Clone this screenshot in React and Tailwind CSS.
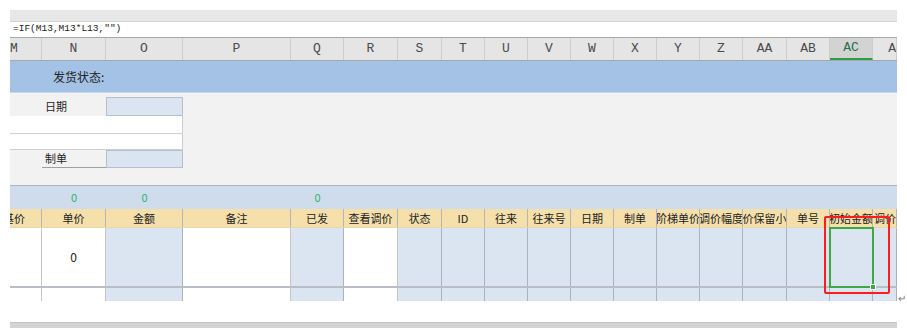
import React from "react";

const cjk = { fontFamily: '"Noto Sans CJK SC", "Noto Sans", sans-serif' };
const song = { fontFamily: '"Liberation Mono", "Noto Sans CJK SC", monospace' };

const cols = [
  { k: "M", w: 32, head: "基价", blue: false, shift: true },
  { k: "N", w: 64, head: "单价", blue: false, sum: "0", val: "0" },
  { k: "O", w: 77, head: "金额", blue: true, sum: "0" },
  { k: "P", w: 108, head: "备注", blue: false },
  { k: "Q", w: 53, head: "已发", blue: true, sum: "0" },
  { k: "R", w: 54, head: "查看调价", blue: false },
  { k: "S", w: 44, head: "状态", blue: true },
  { k: "T", w: 43, head: "ID", blue: true },
  { k: "U", w: 43, head: "往来", blue: true },
  { k: "V", w: 43, head: "往来号", blue: true },
  { k: "W", w: 43, head: "日期", blue: true },
  { k: "X", w: 43, head: "制单", blue: true },
  { k: "Y", w: 43, head: "阶梯单价", blue: true },
  { k: "Z", w: 43, head: "调价幅度", blue: true },
  { k: "AA", w: 44, head: "单价保留小数", blue: true },
  { k: "AB", w: 43, head: "单号", blue: true },
  { k: "AC", w: 43, head: "初始金额", blue: true, active: true },
  { k: "AD", w: 24, head: "调价单价", blue: true, tail: true },
];

// one grid cell; the first and last columns are cut by the window edge
function Cell({ c, className, children }) {
  const inner = c.shift
    ? { width: 56, marginLeft: -24 }
    : c.tail
    ? { width: 46, marginLeft: 0 }
    : { width: "100%" };
  return (
    <div className={"h-full shrink-0 overflow-hidden " + (className || "")} style={{ width: c.w }}>
      <div className="h-full flex items-center justify-center whitespace-nowrap" style={inner}>
        {children}
      </div>
    </div>
  );
}

function App() {
  return (
    <div className="relative w-[907px] h-[328px] bg-white overflow-hidden">
      <div className="h-[10px]" />
      <div className="relative ml-[10px] w-[887px]">
        {/* toolbar strip */}
        <div className="h-[12px] bg-[#e7e7e7] border-b border-[#d2d2d2]" />

        {/* formula bar */}
        <div className="h-[15px] bg-white rounded-tl-[4px] flex items-center pl-[3px] text-[9.5px] text-[#222]" style={song}>
          =IF(M13,M13*L13,"")
        </div>

        {/* column letters */}
        <div className="flex h-[24px] bg-[#e5e5e5] border-t border-b border-[#a8a8a8] text-[13px]">
          {cols.map((c) => (
            <Cell
              key={c.k}
              c={c}
              className={
                "border-r border-[#cdcdcd] " +
                (c.active ? "bg-[#d3d3d3] border-b-2 border-b-[#2e9e45] text-[#217346]" : "text-[#4a4a4a]")
              }
            >
              <span style={song}>{c.k}</span>
            </Cell>
          ))}
        </div>

        {/* status row */}
        <div className="h-[32px] bg-[#a4c2e6] border-b border-[#c9d8ea] flex items-center pl-[43px] text-[12px] text-[#222]" style={cjk}>
          发货状态:
        </div>

        {/* form area */}
        <div className="h-[92px] bg-[#f2f2f2] pt-[4px] text-[11px] text-[#222]" style={cjk}>
          <div className="flex h-[19px]">
            <div className="w-[32px]" />
            <div className="w-[64px] flex items-center pl-[3px]">日期</div>
            <div className="w-[77px] bg-[#dbe5f2] border border-[#b6bfca]" />
          </div>
          <div className="w-[173px] h-[17px] bg-white border-r border-[#cfcfcf]" />
          <div className="w-[173px] h-[17px] bg-white border-t border-r border-b border-[#cfcfcf]" />
          <div className="flex h-[18px]">
            <div className="w-[32px]" />
            <div className="w-[64px] flex items-center pl-[3px] border-b border-[#a0a0a0]">制单</div>
            <div className="w-[77px] bg-[#dbe5f2] border border-[#b6bfca]" />
          </div>
        </div>

        {/* totals row */}
        <div className="flex h-[24px] bg-[#cedcec] border-t border-[#a9b5c3] text-[11px] text-[#2fb36d]" style={cjk}>
          {cols.map((c) => (
            <Cell key={c.k} c={c}>{c.sum}</Cell>
          ))}
        </div>

        {/* field headers */}
        <div className="flex h-[19px] bg-[#f5dfab] border-b border-[#e8d6a8] text-[11px] text-[#222]" style={cjk}>
          {cols.map((c) => (
            <Cell key={c.k} c={c} className="border-r border-[#b5b5b5]">
              {c.head}
            </Cell>
          ))}
        </div>

        {/* data rows */}
        {[60, 13].map((h, i) => (
          <div
            key={i}
            className={"flex text-[12px] text-[#222] " + (i === 0 ? "border-b-2 border-[#b9bec6]" : "")}
            style={{ height: h, ...cjk }}
          >
            {cols.map((c) => (
              <Cell
                key={c.k}
                c={c}
                className={"border-r " + (c.blue ? "bg-[#dbe5f2] border-[#a9b3c0]" : "bg-white border-[#c6c6c6]")}
              >
                {i === 0 ? c.val : null}
              </Cell>
            ))}
          </div>
        ))}

        <div className="h-[21px] bg-white" />
        <div className="h-[6px] bg-[#d4d4d4] border-t border-[#c4c4c4]" />

        {/* selected cell */}
        <div className="absolute left-[819px] top-[217px] w-[45px] h-[61px] border-2 border-[#3fa845]">
          <div className="absolute -right-[4px] -bottom-[4px] w-[6px] h-[6px] bg-[#3fa845] border border-white" />
        </div>
        {/* red annotation box */}
        <div className="absolute left-[814px] top-[206px] w-[66px] h-[78px] border-2 border-[#ff1c1c] rounded-[2px]" />
      </div>

      <div className="absolute left-[898px] top-[290px] text-[10px] text-[#777]" style={cjk}>↵</div>
    </div>
  );
}

export default App;
